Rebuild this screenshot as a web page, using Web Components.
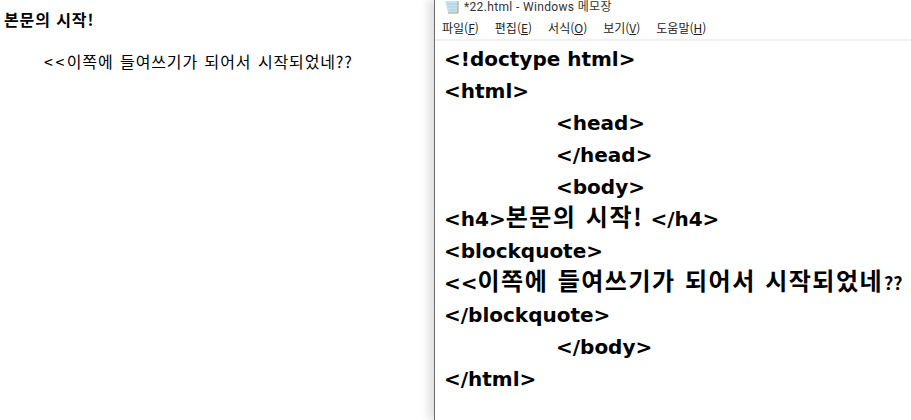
<!doctype html>
<html lang="ko">
<head>
<meta charset="utf-8">
<title>22.html</title>
<style>
  html, body { margin: 0; height: 100%; background: #fff; overflow: hidden; }
  body { font-family: "Noto Sans CJK KR", "Liberation Sans", sans-serif; }
  #desk { display: flex; width: 911px; height: 420px; }
</style>
</head>
<body>
<div id="desk">
  <browser-page>
    <h4 slot="title">본문의 시작!</h4>
    <span slot="quote" class="lt">&lt;&lt;</span><span slot="quote">이쪽에 들여쓰기가 되어서 시작되었네??</span>
  </browser-page>
  <notepad-window title-text="*22.html - Windows 메모장">
    <code-line>&lt;!doctype html&gt;</code-line>
    <code-line>&lt;html&gt;</code-line>
    <code-line indent>&lt;head&gt;</code-line>
    <code-line indent>&lt;/head&gt;</code-line>
    <code-line indent>&lt;body&gt;</code-line>
    <code-line>&lt;h4&gt;<span>본문의 시작!</span> &lt;/h4&gt;</code-line>
    <code-line>&lt;blockquote&gt;</code-line>
    <code-line>&lt;&lt;<span>이쪽에 들여쓰기가 되어서 시작되었네</span><em>??</em></code-line>
    <code-line>&lt;/blockquote&gt;</code-line>
    <code-line indent>&lt;/body&gt;</code-line>
    <code-line>&lt;/html&gt;</code-line>
  </notepad-window>
</div>
<script>
class BrowserPage extends HTMLElement {
  connectedCallback() {
    this.attachShadow({ mode: 'open' });
    this.shadowRoot.innerHTML = `
      <style>
        :host { display: block; width: 434px; flex: none; box-sizing: border-box; padding: 9px 0 0 4px;
          font-family: "Noto Sans CJK KR", sans-serif; color: #000; }
        .title { font-size: 16px; font-weight: 700; line-height: 20px; letter-spacing: .9px; }
        .quote { font-size: 16px; line-height: 20px; margin: 22px 0 0 40px; letter-spacing: .85px; word-spacing: 1.3px; white-space: nowrap; }
        ::slotted(h4) { margin: 0; font: inherit; }
        ::slotted(.lt) { letter-spacing: 2.5px; }
      </style>
      <div class="title"><slot name="title"></slot></div>
      <div class="quote"><slot name="quote"></slot></div>
    `;
  }
}
class NotepadWindow extends HTMLElement {
  connectedCallback() {
    this.attachShadow({ mode: 'open' });
    this.shadowRoot.innerHTML = `
      <style>
        :host { display: flex; flex-direction: column; flex: 1; min-width: 0; height: 420px;
          border-left: 1px solid #6b6b6b; box-shadow: -6px 0 8px rgba(0,0,0,.12);
          background: #fff; font-family: "Noto Sans CJK KR", sans-serif; color: #000; }
        .titlebar { display: flex; align-items: center; gap: 5px; height: 14px; padding-left: 9px;
          font-family: Roboto, "Noto Sans CJK KR", sans-serif; font-size: 12px; line-height: 14px; letter-spacing: .35px; color: #333; }
        .menu { display: flex; gap: 16px; height: 27px; align-items: center; padding: 2px 0 0 7px; box-sizing: border-box;
          font-size: 12px; color: #222; border-bottom: 2px solid #f0f0f0; }
        .menu u { text-underline-offset: 1px; }
        .text { padding: 2px 0 0 9px; }
        svg { display: block; }
      </style>
      <div class="titlebar">
        <svg width="15" height="13" viewBox="0 0 15 13">
          <path d="M1 0h13v11.5H4z" fill="#c4e2ee"/>
          <path d="M4 3h9M4.5 6h8.500M5 9h8" stroke="#a6d0e2"/>
          <path d="M14 0v12H4" fill="none" stroke="#a89a70"/>
        </svg>
        <span>${this.getAttribute('title-text')}</span>
      </div>
      <div class="menu">
        <span>파일(<u>F</u>)</span><span>편집(<u>E</u>)</span><span>서식(<u>O</u>)</span><span>보기(<u>V</u>)</span><span>도움말(<u>H</u>)</span>
      </div>
      <div class="text"><slot></slot></div>
    `;
  }
}
class CodeLine extends HTMLElement {
  connectedCallback() {
    this.attachShadow({ mode: 'open' });
    this.shadowRoot.innerHTML = `
      <style>
        :host { display: block; height: 32px; line-height: 32px; white-space: nowrap;
          font-family: "DejaVu Sans", "Noto Sans CJK KR", sans-serif; font-size: 20px; font-weight: 700; color: #000; }
        :host([indent]) { padding-left: 112px; }
        ::slotted(span) { font-family: "Noto Sans CJK KR", sans-serif; font-size: 24px; line-height: 1;
          letter-spacing: 1.5px; word-spacing: 1.2px; }
        ::slotted(em) { font-family: "Noto Sans CJK KR", sans-serif; font-style: normal; font-size: 18px; line-height: 1; padding-left: 1px; }
      </style>
      <slot></slot>
    `;
  }
}
customElements.define('browser-page', BrowserPage);
customElements.define('notepad-window', NotepadWindow);
customElements.define('code-line', CodeLine);
</script>
</body>
</html>
